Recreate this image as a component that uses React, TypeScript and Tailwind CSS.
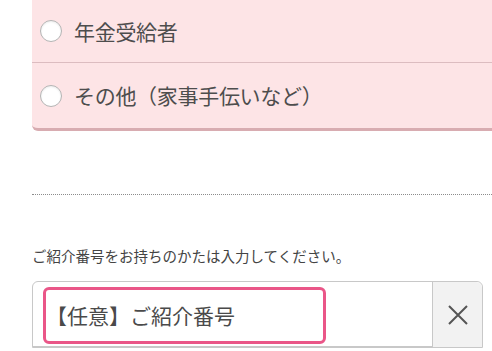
const jp = { fontFamily: '"Noto Sans CJK JP", "Noto Sans", sans-serif' };

const options = [
  { label: "年金受給者", h: "h-[63px]" },
  { label: "その他（家事手伝いなど）", h: "h-[65px]" },
];

function Radio() {
  return (
    <span className="block w-[22px] h-[22px] shrink-0 rounded-full bg-white border border-[#b4b4b4] shadow-[inset_0_1px_2px_rgba(0,0,0,0.08)]" />
  );
}

export default function App() {
  return (
    <div className="w-[492px] h-[351px] overflow-hidden bg-white text-[#4d4d4d]" style={jp}>
      <div className="pl-[32px]">
        <div className="w-[470px] bg-[#fde4e6] rounded-b-[6px] border-b-[3px] border-[#d8acb1]">
          {options.map((o, i) => (
            <div
              key={o.label}
              className={`flex items-center gap-[12px] pl-[8px] ${o.h} ${i === 0 ? "border-b border-[#dcbcc0]" : ""}`}
            >
              <Radio />
              <span className="text-[21px] leading-none tracking-[-0.3px]">{o.label}</span>
            </div>
          ))}
        </div>

        <div className="mt-[63px] border-t border-dotted border-[#8c8c8c]" />

        <p className="mt-[51px] text-[14.5px] leading-[20px] text-[#444]">
          ご紹介番号をお持ちのかたは入力してください。
        </p>

        <div className="mt-[15px] w-[451px] h-[67px] flex border border-[#c8c8c8] rounded-t-[6px]">
          <div className="flex-1 pt-[5px] pl-[10px] pr-[106px] border-b border-[#c8c8c8]">
            <div className="h-[57px] flex items-center border-[3px] border-[#ea5688] rounded-[6px] bg-white">
              <span className="text-[21px] leading-none text-[#4a4a4a]">【任意】ご紹介番号</span>
            </div>
          </div>
          <button className="w-[50px] flex items-center justify-center bg-[#f2f2f2] border-l border-[#c8c8c8] rounded-tr-[6px]">
            <svg width="20" height="20" viewBox="0 0 20 20" fill="none" stroke="#555" strokeWidth="2">
              <path d="M1 1 L19 19 M19 1 L1 19" />
            </svg>
          </button>
        </div>
      </div>
    </div>
  );
}
